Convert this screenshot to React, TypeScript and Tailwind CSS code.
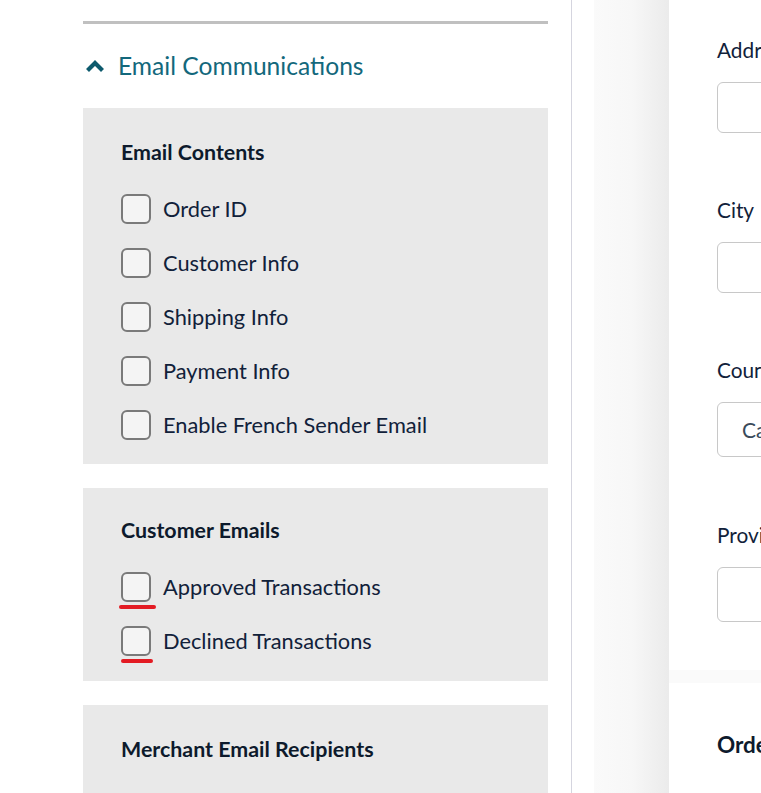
import { useState } from "react";

const contents = ["Order ID", "Customer Info", "Shipping Info", "Payment Info", "Enable French Sender Email"];
const customer = ["Approved Transactions", "Declined Transactions"];

const Check = ({ label, mark }: { label: string; mark?: string }) => {
  const [on, setOn] = useState(false);
  return (
    <label className="flex h-[30px] cursor-pointer items-center gap-[12px]">
      <span className="relative">
        <input
          type="checkbox"
          checked={on}
          onChange={() => setOn(!on)}
          className="block h-[30px] w-[30px] appearance-none rounded-[6px] border-2 border-[#7a7a7a] bg-[#f4f4f4] checked:bg-[#0f6478]"
        />
        {mark && <span className={`absolute top-[33px] h-[4px] rounded-full bg-[#e31b23] ${mark}`} />}
      </span>
      <span className="whitespace-nowrap text-[21.8px] leading-[30px] text-[#11213a]">{label}</span>
    </label>
  );
};

const Field = ({ label, h, value, mt }: { label: string; h: string; value?: string; mt: string }) => (
  <div className={mt}>
    <div className="whitespace-nowrap text-[20.8px] leading-[24px] text-[#11213a]">{label}</div>
    <div className={`mt-[20px] flex w-[300px] items-center rounded-[6px] border border-[#c8c8c8] bg-white pl-[24px] ${h}`}>
      {value && <span className="text-[21px] text-[#3a4a5a]">{value}</span>}
    </div>
  </div>
);

export default function App() {
  const [open, setOpen] = useState(true);

  return (
    <div className="flex h-[793px] overflow-hidden bg-white font-['Lato',sans-serif]">
      {/* settings column */}
      <div className="w-[572px] shrink-0 border-r border-[#d5d5df] pl-[83px] pr-[23px] pt-[21px]">
        <div className="border-t-[3px] border-[#c0c0c0]">
          <button
            onClick={() => setOpen(!open)}
            className="flex h-[84px] items-center gap-[13px] pl-[2px] text-[#13687c]"
          >
            <svg width="20" height="14" viewBox="0 0 20 14" className="text-[#0d5a6d]">
              <path d="M2.5 11.5 L10 4 L17.5 11.5" fill="none" stroke="currentColor" strokeWidth="4.2" />
            </svg>
            <span className="whitespace-nowrap text-[24.6px] leading-[30px]">Email Communications</span>
          </button>

          {open && (
            <div className="flex flex-col gap-[24px]">
              <div className="bg-[#e9e9e9] pb-[24px] pl-[38px] pt-[30px]">
                <h3 className="text-[21.4px] font-bold leading-[28px] text-[#0d1a2c]">Email Contents</h3>
                <div className="mt-[28px] flex flex-col gap-[24px]">
                  {contents.map((c) => (
                    <Check key={c} label={c} />
                  ))}
                </div>
              </div>

              <div className="bg-[#e9e9e9] pb-[25px] pl-[38px] pt-[28px]">
                <h3 className="text-[21.4px] font-bold leading-[28px] text-[#0d1a2c]">Customer Emails</h3>
                <div className="mt-[28px] flex flex-col gap-[24px]">
                  <Check label={customer[0]} mark="-left-[2px] w-[37px]" />
                  <Check label={customer[1]} mark="left-0 w-[32px]" />
                </div>
              </div>

              <div className="h-[120px] bg-[#e9e9e9] pl-[38px] pt-[30px]">
                <h3 className="text-[21.4px] font-bold leading-[28px] text-[#0d1a2c]">Merchant Email Recipients</h3>
              </div>
            </div>
          )}
        </div>
      </div>

      <div className="w-[22px] shrink-0" />
      <div className="w-[75px] shrink-0 bg-gradient-to-r from-[#fafafa] via-[#f7f7f7] to-[#ebebeb]" />

      {/* address form */}
      <div className="flex min-w-0 flex-1 flex-col overflow-hidden bg-[#fafafa]">
        <div className="h-[670px] shrink-0 bg-white pl-[48px] pt-[38px]">
          <Field label="Address" h="h-[51px]" mt="" />
          <Field label="City" h="h-[51px]" mt="mt-[65px]" />
          <Field label="Country" h="h-[55px]" value="Canada" mt="mt-[65px]" />
          <Field label="Province" h="h-[55px]" mt="mt-[66px]" />
        </div>
        <div className="mt-[13px] flex-1 bg-white pl-[48px] pt-[48px]">
          <h3 className="whitespace-nowrap text-[22.5px] font-bold leading-[28px] text-[#0d1a2c]">Order Details</h3>
        </div>
      </div>
    </div>
  );
}
